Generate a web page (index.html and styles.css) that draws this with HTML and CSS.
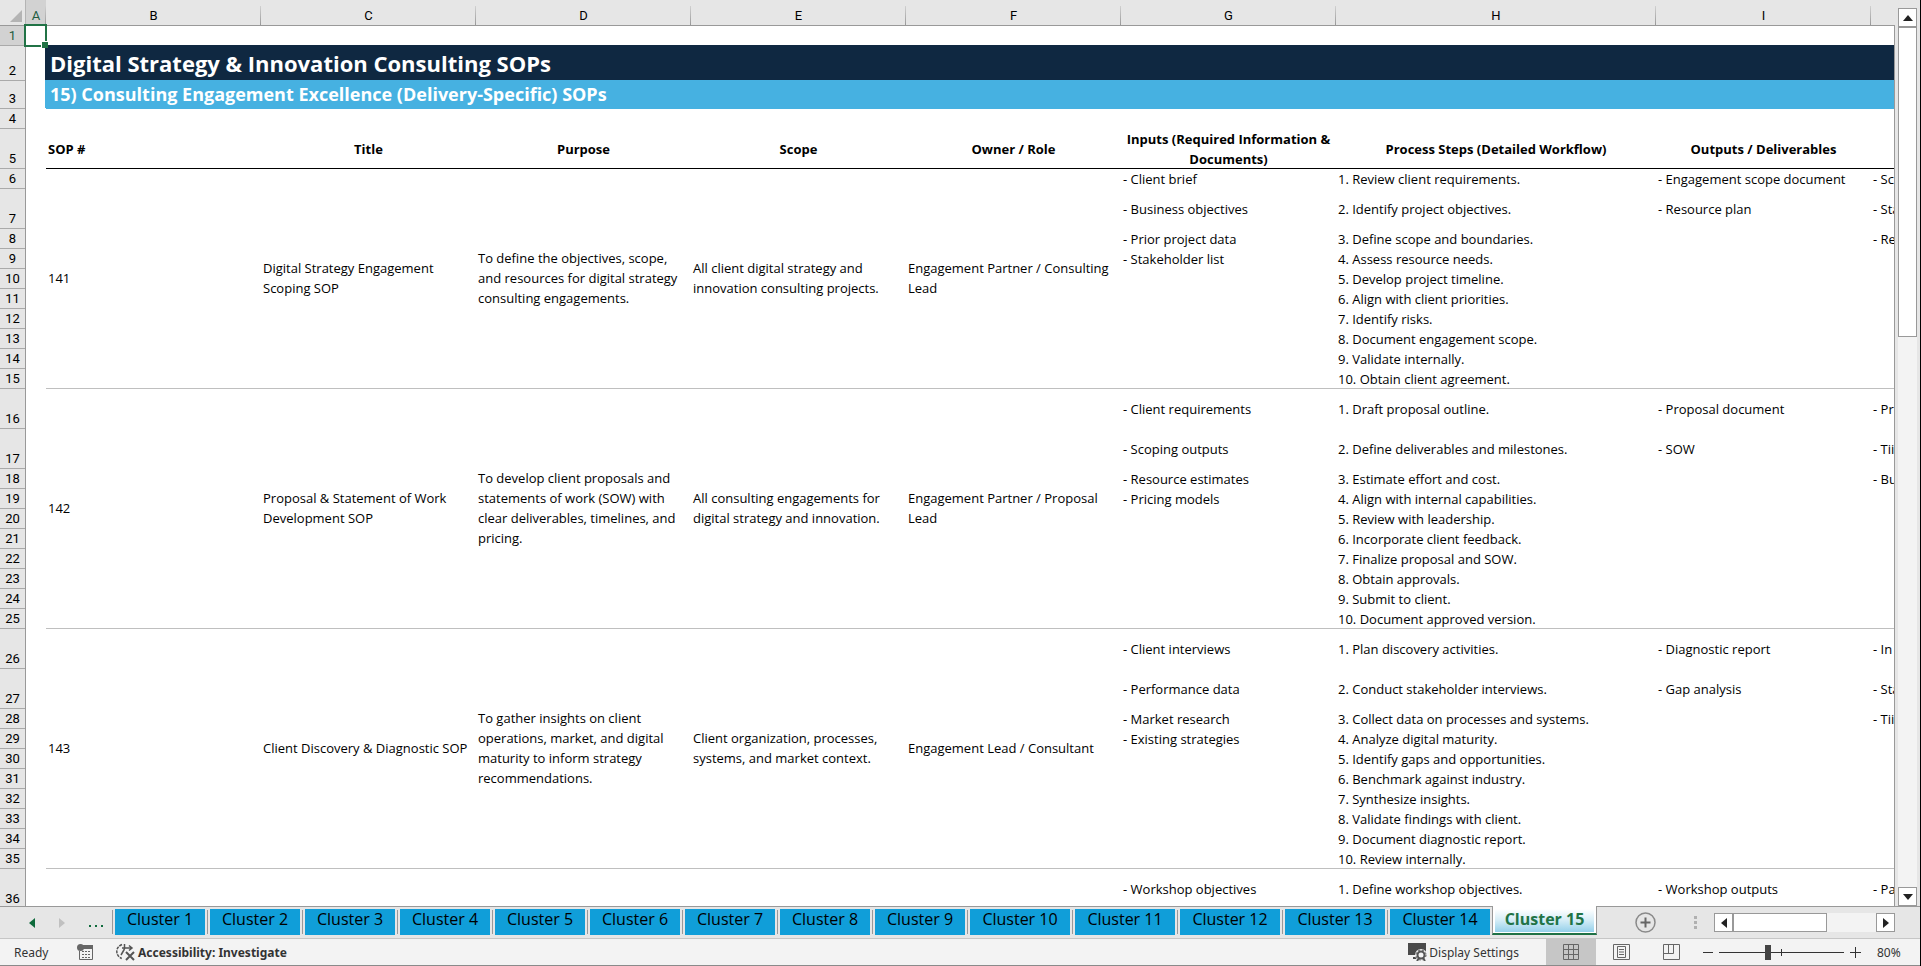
FILE: index.html
```
<!DOCTYPE html>
<html lang="en">
<head>
    <meta charset="UTF-8">
    <meta name="viewport" content="width=device-width, initial-scale=1.0">
    <title>Digital Strategy &amp; Innovation Consulting SOPs</title>
    <link rel="stylesheet" href="styles.css">
</head>
<body>
    <main class="workspace">
        <div class="sheet">
            <table class="grid">
                <colgroup>
                    <col class="col-head"><col class="col-a"><col><col><col><col><col><col><col class="col-steps"><col><col>
                </colgroup>
                <thead>
                    <tr>
                        <th class="corner"><svg width="12" height="12" viewBox="0 0 12 12"><path d="M12 0v12H0z" fill="#b4b4b4"/></svg></th>
                        <th class="selected">A</th><th>B</th><th>C</th><th>D</th><th>E</th><th>F</th><th>G</th><th>H</th><th>I</th><th></th>
                    </tr>
                </thead>
                <tbody id="rows">
                    <tr class="row"><th class="selected">1</th><td class="active-cell"><span class="cursor"></span></td><td colspan="9"></td></tr>
                    <tr class="row-title"><th>2</th><td></td><td colspan="9" class="title">Digital Strategy &amp; Innovation Consulting SOPs</td></tr>
                    <tr class="row-subtitle"><th>3</th><td></td><td colspan="9" class="subtitle">15) Consulting Engagement Excellence (Delivery-Specific) SOPs</td></tr>
                    <tr class="row"><th>4</th><td></td><td colspan="9"></td></tr>
                    <tr class="row-tall labels">
                        <th>5</th><td></td>
                        <td class="sop">SOP #</td><td>Title</td><td>Purpose</td><td>Scope</td><td>Owner / Role</td>
                        <td>Inputs (Required Information &amp; Documents)</td><td>Process Steps (Detailed Workflow)</td><td>Outputs / Deliverables</td><td></td>
                    </tr>
                </tbody>
            </table>
        </div>
        <div class="vscroll">
            <button type="button" aria-label="Scroll up"><svg width="10" height="6" viewBox="0 0 10 6"><path d="M5 0l5 6H0z"/></svg></button>
            <div class="vthumb"></div>
            <div class="track"></div>
            <button type="button" aria-label="Scroll down"><svg width="10" height="6" viewBox="0 0 10 6"><path d="M0 0h10L5 6z"/></svg></button>
        </div>
    </main>

    <nav class="tabbar">
        <div class="tabnav">
            <button type="button" aria-label="Previous sheets"><svg width="6" height="10" viewBox="0 0 6 10"><path d="M6 0v10L0 5z" fill="#0e6b3c"/></svg></button>
            <button type="button" aria-label="Next sheets"><svg width="6" height="10" viewBox="0 0 6 10"><path d="M0 0v10l6-5z" fill="#c0c0c0"/></svg></button>
            <button type="button" class="more" aria-label="More sheets"><svg width="14" height="2" viewBox="0 0 14 2"><path d="M0 0h2v2H0zM6 0h2v2H6zM12 0h2v2h-2z" fill="#0e6b3c"/></svg></button>
        </div>
        <ul class="tabs" id="tabs"></ul>
        <button type="button" class="add" aria-label="New sheet">
            <svg width="21" height="21" viewBox="0 0 21 21" fill="none"><circle cx="10.500" cy="10.500" r="9.500" stroke="#8a8a8a" stroke-width="1.500"/><path d="M10.500 5.500v10M5.500 10.500h10" stroke="#666" stroke-width="2"/></svg>
        </button>
        <div class="hscroll">
            <svg class="grip" width="3" height="13" viewBox="0 0 3 13"><path d="M0 0h3v3H0zM0 5h3v3H0zM0 10h3v3H0z" fill="#b0b0b0"/></svg>
            <button type="button" aria-label="Scroll left"><svg width="6" height="10" viewBox="0 0 6 10"><path d="M6 0v10L0 5z"/></svg></button>
            <div class="hthumb"></div>
            <div class="track"></div>
            <button type="button" aria-label="Scroll right"><svg width="6" height="10" viewBox="0 0 6 10"><path d="M0 0v10l6-5z"/></svg></button>
        </div>
    </nav>

    <footer class="status">
        <span class="ready">Ready</span>
        <button type="button" class="macro" aria-label="Record macro">
            <svg width="16" height="16" viewBox="0 0 16 16"><path d="M4 1.500h11.500v14H2.500V7" fill="none" stroke="#666"/><path d="M6 1h10v4H6z" fill="#666"/><circle cx="3.500" cy="3.500" r="3.500" fill="#666"/><path d="M5 7.500h9M5 10.500h9M5 13.500h9" stroke="#666" stroke-dasharray="2 1"/></svg>
        </button>
        <button type="button" class="access">
            <svg width="19" height="18" viewBox="0 0 19 18" fill="none" stroke="#555"><path d="M6 1.500C2.500 3 .8 5.500.8 8.500s2 6 5 7" stroke-width="1.500" stroke-dasharray="3 1"/><path d="M8.500 1v5M6 5h10M13 2.500L16 5l-3 2.500M8.500 6L5 12" stroke-width="1.500"/><path d="M10 9l8 8M18 9l-8 8" stroke-width="2"/></svg>
            Accessibility: Investigate
        </button>
        <button type="button" class="display">
            <svg width="19" height="18" viewBox="0 0 19 18"><path d="M0 0h18v12H0zM5 14h5v2H5z" fill="#4a4a4a"/><circle cx="13" cy="12" r="6" fill="#f3f3f3"/><circle cx="13" cy="12" r="3.500" fill="none" stroke="#555" stroke-width="2"/><circle cx="13" cy="12" r="5" fill="none" stroke="#555" stroke-dasharray="2 2"/><path d="M11 15l-2 3M15 15l2 3" stroke="#555" stroke-width="2"/></svg>
            Display Settings
        </button>
        <div class="views">
            <button type="button" class="on" aria-label="Normal"><svg width="16" height="16" viewBox="0 0 16 16"><path d="M.5.5h15v15H.5zM5.500.5v15M10.500.5v15M.5 5.500h15M.5 10.500h15"/></svg></button>
            <button type="button" aria-label="Page Layout"><svg width="17" height="16" viewBox="0 0 17 16"><path d="M.5.5h16v15H.5zM4.500 2.500h8v11h-8zM6 5.500h5M6 8h5M6 10.500h5"/></svg></button>
            <button type="button" aria-label="Page Break Preview"><svg width="17" height="16" viewBox="0 0 17 16"><path d="M.5.5h16v15H.5zM.5 9.500h10V.5M5.500.5v9"/></svg></button>
        </div>
        <div class="zoom">
            <button type="button" aria-label="Zoom out"><svg width="10" height="11" viewBox="0 0 10 11"><path d="M0 5.500h10"/></svg></button>
            <input type="range" min="10" max="190" value="80" aria-label="Zoom">
            <button type="button" aria-label="Zoom in"><svg width="11" height="11" viewBox="0 0 11 11"><path d="M0 5.500h11M5.500 0v11"/></svg></button>
            <span class="percent">80%</span>
        </div>
    </footer>

    <script>
        const sops = [
            {
                id: '141',
                title: 'Digital Strategy Engagement Scoping SOP',
                purpose: 'To define the objectives, scope, and resources for digital strategy consulting engagements.',
                scope: 'All client digital strategy and innovation consulting projects.',
                owner: 'Engagement Partner / Consulting Lead',
                heights: [20, 40],
                inputs: ['Client brief', 'Business objectives', 'Prior project data', 'Stakeholder list'],
                steps: ['Review client requirements.', 'Identify project objectives.', 'Define scope and boundaries.', 'Assess resource needs.', 'Develop project timeline.', 'Align with client priorities.', 'Identify risks.', 'Document engagement scope.', 'Validate internally.', 'Obtain client agreement.'],
                outputs: ['Engagement scope document', 'Resource plan'],
                metrics: ['Sc', 'Sta', 'Re']
            },
            {
                id: '142',
                title: 'Proposal & Statement of Work Development SOP',
                purpose: 'To develop client proposals and statements of work (SOW) with clear deliverables, timelines, and pricing.',
                scope: 'All consulting engagements for digital strategy and innovation.',
                owner: 'Engagement Partner / Proposal Lead',
                heights: [40, 40],
                inputs: ['Client requirements', 'Scoping outputs', 'Resource estimates', 'Pricing models'],
                steps: ['Draft proposal outline.', 'Define deliverables and milestones.', 'Estimate effort and cost.', 'Align with internal capabilities.', 'Review with leadership.', 'Incorporate client feedback.', 'Finalize proposal and SOW.', 'Obtain approvals.', 'Submit to client.', 'Document approved version.'],
                outputs: ['Proposal document', 'SOW'],
                metrics: ['Pr', 'Tii', 'Bu']
            },
            {
                id: '143',
                title: 'Client Discovery & Diagnostic SOP',
                purpose: 'To gather insights on client operations, market, and digital maturity to inform strategy recommendations.',
                scope: 'Client organization, processes, systems, and market context.',
                owner: 'Engagement Lead / Consultant',
                heights: [40, 40],
                inputs: ['Client interviews', 'Performance data', 'Market research', 'Existing strategies'],
                steps: ['Plan discovery activities.', 'Conduct stakeholder interviews.', 'Collect data on processes and systems.', 'Analyze digital maturity.', 'Identify gaps and opportunities.', 'Benchmark against industry.', 'Synthesize insights.', 'Validate findings with client.', 'Document diagnostic report.', 'Review internally.'],
                outputs: ['Diagnostic report', 'Gap analysis'],
                metrics: ['In', 'Sta', 'Tii']
            },
            {
                id: '', title: '', purpose: '', scope: '', owner: '',
                heights: [40],
                inputs: ['Workshop objectives'],
                steps: ['Define workshop objectives.'],
                outputs: ['Workshop outputs'],
                metrics: ['Pa']
            }
        ];

        const rows = document.getElementById('rows');
        let rowNumber = 6;

        function addCell(tr, text, span) {
            const td = tr.insertCell();
            td.textContent = text;
            if (span) {
                td.rowSpan = span;
                td.className = 'merged';
            }
        }

        sops.forEach(sop => {
            sop.steps.forEach((step, i) => {
                const tr = rows.insertRow();
                tr.className = (sop.heights[i] === 40 ? 'row-tall' : 'row') + (i === 9 ? ' last' : '');
                const th = document.createElement('th');
                th.textContent = rowNumber++;
                tr.appendChild(th);
                addCell(tr, '');
                // id, title, purpose, scope and owner span the whole SOP
                if (i === 0) {
                    [sop.id, sop.title, sop.purpose, sop.scope, sop.owner].forEach(text => addCell(tr, text, sop.steps.length));
                }
                addCell(tr, sop.inputs[i] ? '- ' + sop.inputs[i] : '');
                addCell(tr, (i + 1) + '. ' + step);
                addCell(tr, sop.outputs[i] ? '- ' + sop.outputs[i] : '');
                addCell(tr, sop.metrics[i] ? '- ' + sop.metrics[i] : '');
            });
        });

        const tabs = document.getElementById('tabs');
        for (let n = 1; n <= 15; n++) {
            const li = document.createElement('li');
            const button = document.createElement('button');
            button.type = 'button';
            button.textContent = 'Cluster ' + n;
            if (n === 15) {
                li.className = 'active';
            } else if (n > 9) {
                li.className = 'wide';
            }
            li.appendChild(button);
            tabs.appendChild(li);
        }
    </script>
</body>
</html>
```
FILE: styles.css
```
* { box-sizing: border-box; }
body { margin: 0; height: 100vh; display: flex; flex-direction: column; overflow: hidden; background: #e6e6e6; border-right: 1px solid #000; font-family: "Open Sans", sans-serif; font-size: 13px; color: #000; }
button { padding: 0; border: 0; background: none; font: inherit; color: inherit; display: flex; align-items: center; justify-content: center; }
svg { display: block; flex: none; }

/* sheet */
.workspace { flex: 1; min-height: 0; display: flex; padding-right: 3px; }
.sheet { flex: 1; min-width: 0; overflow: hidden; position: relative; }
.sheet::after { content: ""; position: absolute; top: 25px; right: 0; bottom: 0; width: 1px; background: #999; }
.grid { width: 1920px; table-layout: fixed; border-collapse: separate; border-spacing: 0; background: #fff; line-height: 20px; }
.grid col { width: 215px; }
.grid .col-head { width: 26px; }
.grid .col-a { width: 20px; }
.grid .col-steps { width: 320px; }
.grid col:last-child { width: 49px; }
.grid th { padding: 0; background: #e6e6e6; font-family: Roboto, sans-serif; font-size: 13px; font-weight: normal; }
.grid td { padding: 0 2px; vertical-align: middle; }
.grid thead th { height: 26px; padding: 7px 0 0; border-bottom: 1px solid #999; background: linear-gradient(#d0d0d0, #999) right bottom / 1px 19px no-repeat #e6e6e6; line-height: 18px; }
.grid thead .selected { background-color: #d2d2d2; }
.grid thead .corner { background: #e6e6e6; border-right: 1px solid #b4b4b4; }
.corner svg { margin: 0 0 0 10px; }
tbody th { border-right: 1px solid #999; vertical-align: bottom; box-shadow: inset 0 -1px #aaa; }
.grid .selected { background-color: #d2d2d2; color: #1f5c3f; }
.row { height: 20px; }
.row-tall { height: 40px; }
.row-title { height: 35px; }
.row-subtitle { height: 28px; }
.active-cell { position: relative; }
/* selection frame, lies over the neighbouring cells */
.cursor { position: absolute; z-index: 1; top: -2px; left: -2px; right: -1px; bottom: -1px; border: 2px solid #217346; }
.cursor::after { content: ""; position: absolute; right: -3px; bottom: -3px; width: 6px; height: 6px; background: #217346; border: solid #fff; border-width: 1px 0 0 1px; }
.grid .title { padding: 0 4px 2px; background: #0f2841; box-shadow: -1px -1px #0f2841; color: #fff; font-size: 22px; font-weight: bold; line-height: 32px; }
.grid .subtitle { padding: 0 4px 2px; background: #46b1e1; box-shadow: -1px -1px #46b1e1; color: #fff; font-size: 18px; font-weight: bold; line-height: 24px; }
.labels td { font-weight: bold; text-align: center; box-shadow: inset 0 -1px #000; }
.labels .sop { text-align: left; }
.grid .merged { padding-bottom: 2px; }
.merged, .last td { box-shadow: inset 0 -1px #bfbfbf; }
.labels td:nth-child(2), .last td:nth-child(2) { box-shadow: none; }

/* scroll bars */
.vscroll { width: 19px; margin: 8px 0 0 3px; display: flex; flex-direction: column; }
.vscroll button, .hscroll button { flex: none; width: 19px; height: 19px; border: 1px solid #999; background: #fff; }
.vscroll path, .hscroll button path { fill: #222; }
.vthumb { height: 310px; border: 1px solid #999; background: #fff; }
.track { flex: 1; background: #f3f3f3; }

/* sheet tabs */
.tabbar { height: 32px; display: flex; border-top: 1px solid #999; }
.tabnav { width: 112px; padding: 0 9px 0 29px; display: flex; align-items: center; justify-content: space-between; }
.more { padding-top: 6px; }
.tabs { margin: 0; padding: 0; display: flex; list-style: none; font-size: 16px; line-height: 22px; }
.tabs li { width: 95px; height: 24px; margin-top: 3px; padding: 0 2px; border-left: 1px solid #999; }
.tabs .wide { width: 105px; }
.tabs li button { width: 100%; height: 26px; margin-top: -1px; padding-bottom: 6px; background: #109ed9; }
.tabs .active { width: 105px; height: 29px; margin-top: -1px; padding: 0; border: 0; }
.tabs .active button { height: 29px; margin: 0; padding: 3px 2px 1px; border: solid #999; border-width: 0 1px 2px; border-bottom-color: #1e7145; background: linear-gradient(#fff, #d3ecf6 50%, #94d0ea) content-box, #fff; color: #217346; font-weight: bold; line-height: 20px; align-items: flex-start; }
.add { width: 21px; margin-left: 38px; }
.hscroll { width: 201px; height: 19px; margin: 6px 25px 0 auto; display: flex; align-items: center; }
.hscroll .track { height: 19px; }
.grip { margin-right: 17px; }
.hthumb { width: 94px; height: 19px; border: 1px solid #999; background: #fff; }

/* status bar */
.status { height: 28px; display: flex; align-items: center; border-top: 1px solid #c6c6c6; border-bottom: 1px solid #8a8a8a; background: #f3f3f3; color: #333; font-family: "Noto Sans", sans-serif; font-size: 12px; }
.ready { width: 63px; padding-left: 14px; }
.macro { margin: 0 23px 0 14px; }
.access { gap: 3px; font-weight: bold; }
.display { gap: 2px; margin-left: auto; margin-right: 27px; }
.views { display: flex; align-self: stretch; }
.views button { width: 50px; }
.views .on { background: #c6c6c6; }
.views path { fill: none; stroke: #666; }
.zoom { display: flex; align-items: center; padding-right: 17px; margin-left: 7px; }
.zoom path { stroke: #333; }
.zoom input { appearance: none; width: 125px; height: 15px; margin: 0 6px; background: linear-gradient(#333, #333) center / 100% 1px no-repeat, linear-gradient(#333, #333) center / 1px 7px no-repeat; }
.zoom input::-webkit-slider-thumb { appearance: none; width: 6px; height: 15px; background: #444; }
.percent { width: 26px; margin-left: 16px; }
```
